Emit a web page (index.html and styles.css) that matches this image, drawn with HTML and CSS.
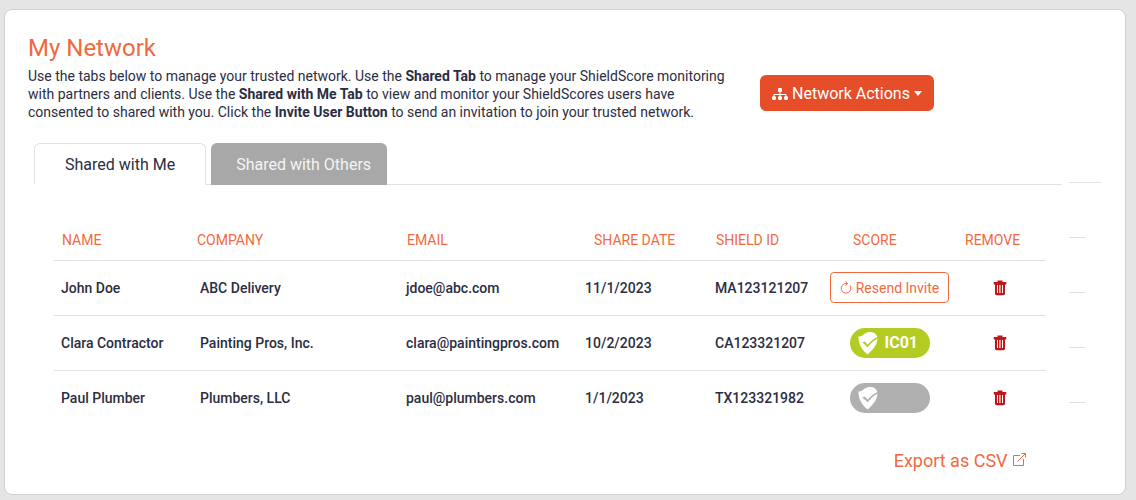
FILE: index.html
```html
<!doctype html>
<html lang="en">
<head>
  <meta charset="UTF-8">
  <meta name="viewport" content="width=device-width, initial-scale=1.0">
  <title>My Network</title>
  <link rel="stylesheet" href="styles.css">
</head>
<body>

  <!-- shared icons -->
  <svg class="sprite" width="0" height="0">
    <symbol id="trash" viewBox="0 0 14 16">
      <path d="M4.500 .5h5V2h3.800v2.500H.7V2h3.800z"/>
      <path fill-rule="evenodd" d="M2 4h10v9.500c0 1-.7 1.700-1.700 1.700H3.700c-1 0-1.700-.7-1.700-1.700zM4 5v8h1V5zM6.300 5v8h1.200V5zM9 5v8h1V5z"/>
    </symbol>
    <symbol id="shield" viewBox="0 0 20 24">
      <path d="M.4 5.400C2.500 6 4.500 4.500 6.500 2.800C9 .8 13 .4 15.500 1.500C17.500 2.500 18.800 4.200 19.400 6C16 7.500 13 10 9.600 13.800L6.800 10.400L4.200 11.200L9.700 16.200C12.500 12.800 15.500 9.800 19.500 7.600C19.300 14 15 18.500 9.800 23.600C4 19 .5 13 .4 5.400z"/>
    </symbol>
  </svg>

  <div class="card">

    <header class="intro">
      <div class="intro-text">
        <h1>My Network</h1>
        <p>Use the tabs below to manage your trusted network. Use the <b>Shared Tab</b> to manage your ShieldScore monitoring
        with partners and clients. Use the <b>Shared with Me Tab</b> to view and monitor your ShieldScores users have
        consented to shared with you. Click the <b>Invite User Button</b> to send an invitation to join your trusted network.</p>
      </div>
      <button type="button" class="btn-actions">
        <svg width="16" height="13" viewBox="0 0 16 13" fill="currentColor">
          <rect x="6" y="1" width="4" height="4" rx="1"/>
          <path d="M2 9.500V7.500h12v2M8 5v4.500" fill="none" stroke="currentColor"/>
          <rect x="0" y="9" width="4" height="4" rx="1.500"/>
          <rect x="6" y="9" width="4" height="4" rx="1.500"/>
          <rect x="12" y="9" width="4" height="4" rx="1.500"/>
        </svg>
        Network Actions
        <span class="caret"></span>
      </button>
    </header>

    <div class="content">
      <main>
        <div class="tabs" role="tablist">
          <button type="button" class="tab active" role="tab" aria-selected="true">Shared with Me</button>
          <button type="button" class="tab" role="tab" aria-selected="false">Shared with Others</button>
        </div>

        <table>
          <colgroup>
            <col class="col-name">
            <col class="col-company">
            <col class="col-email">
            <col class="col-date">
            <col class="col-id">
            <col class="col-score">
            <col class="col-remove">
          </colgroup>
          <thead>
            <tr>
              <th>NAME</th>
              <th class="th-company">COMPANY</th>
              <th>EMAIL</th>
              <th class="th-date">SHARE DATE</th>
              <th>SHIELD ID</th>
              <th class="th-score">SCORE</th>
              <th class="th-remove">REMOVE</th>
            </tr>
          </thead>
          <tbody>
            <tr>
              <td>John Doe</td>
              <td>ABC Delivery</td>
              <td>jdoe@abc.com</td>
              <td>11/1/2023</td>
              <td>MA123121207</td>
              <td class="center">
                <button type="button" class="btn-resend">
                  <svg width="12" height="13" viewBox="0 0 12 13" fill="none" stroke="currentColor">
                    <path d="M7 2.500H6A4.800 4.800 0 1 0 9.800 4.300"/>
                    <path d="M5.500 .5L7.700 2.500L5.500 4.500"/>
                  </svg>
                  Resend Invite
                </button>
              </td>
              <td class="center"><button type="button" class="btn-remove" aria-label="Remove John Doe"><svg width="14" height="16"><use href="#trash"/></svg></button></td>
            </tr>
            <tr>
              <td>Clara Contractor</td>
              <td>Painting Pros, Inc.</td>
              <td>clara@paintingpros.com</td>
              <td>10/2/2023</td>
              <td>CA123321207</td>
              <td class="center"><span class="score good"><svg width="20" height="24"><use href="#shield"/></svg>IC01</span></td>
              <td class="center"><button type="button" class="btn-remove" aria-label="Remove Clara Contractor"><svg width="14" height="16"><use href="#trash"/></svg></button></td>
            </tr>
            <tr>
              <td>Paul Plumber</td>
              <td>Plumbers, LLC</td>
              <td>paul@plumbers.com</td>
              <td>1/1/2023</td>
              <td>TX123321982</td>
              <td class="center"><span class="score"><svg width="20" height="24"><use href="#shield"/></svg></span></td>
              <td class="center"><button type="button" class="btn-remove" aria-label="Remove Paul Plumber"><svg width="14" height="16"><use href="#trash"/></svg></button></td>
            </tr>
          </tbody>
        </table>

        <div class="export">
          <a href="#">Export as CSV
            <svg width="15" height="15" viewBox="0 0 15 15" fill="none" stroke="currentColor">
              <path d="M8 3.500H1.500v10h10V7"/>
              <path d="M5.500 9.500L13.500 1.500M9.500 1.500h4v4"/>
            </svg>
          </a>
        </div>
      </main>

      <!-- empty side column, only the rules show -->
      <aside class="side">
        <div class="side-head"></div>
        <div class="side-row"></div>
        <div class="side-row"></div>
        <div class="side-row"></div>
        <div class="side-row"></div>
      </aside>
    </div>

  </div>

</body>
</html>
```
FILE: styles.css
```css
* {
  box-sizing: border-box;
}

body {
  margin: 0;
  padding: 9px 10px 5px 4px;
  background-color: #e5e5e5;
  font-family: Roboto, Arial, sans-serif;
  font-size: 14px;
  color: #2b2d42;
}

button {
  font-family: inherit;
  cursor: pointer;
}

.sprite {
  position: absolute;
}

.card {
  background-color: white;
  border: 1px solid #d0d0d0;
  border-radius: 8px;
  padding: 24px 24px 21px 23px;
}

/* Title and actions */
.intro {
  display: flex;
  align-items: flex-end;
  gap: 22px;
}

h1 {
  margin: 0 0 5px;
  font-size: 24px;
  font-weight: 400;
  line-height: 28px;
  color: #f06a3f;
}

.intro p {
  margin: 0;
  line-height: 18px;
}

.intro b {
  font-weight: 700;
}

.intro-text {
  flex: 0 1 710px;
}

.btn-actions {
  display: flex;
  align-items: center;
  gap: 4px;
  height: 36px;
  margin-bottom: 10px;
  padding: 0 12px;
  border: none;
  border-radius: 6px;
  background-color: #e64e29;
  color: white;
  font-size: 16px;
  white-space: nowrap;
}

.caret {
  border-top: 5px solid white;
  border-left: 4px solid transparent;
  border-right: 4px solid transparent;
}

.content {
  display: flex;
  gap: 7px;
  margin-top: 22px;
}

main {
  flex: 1;
  padding-left: 6px;
}

/* Tabs */
.tabs {
  display: flex;
  gap: 5px;
  border-bottom: 1px solid #dee2e6;
}

.tab {
  height: 42px;
  margin-bottom: -1px;
  padding: 0 16px 0 25px;
  border: none;
  border-radius: 6px 6px 0 0;
  background-color: #a8a8a8;
  color: #f4f4f4;
  font-size: 16px;
}

.tab.active {
  padding: 0 30px;
  border: 1px solid #dee2e6;
  border-bottom-color: white;
  background-color: white;
  color: #2b2d42;
}

/* Network table */
table {
  width: calc(100% - 36px);
  margin: 36px 16px 0 20px;
  border-collapse: collapse;
  table-layout: fixed;
}

.col-name { width: 139px; }
.col-company { width: 206px; }
.col-email { width: 179px; }
.col-date { width: 130px; }
.col-id { width: 117px; }
.col-score { width: 129px; }
.col-remove { width: 92px; }

th {
  height: 39px;
  padding: 0 8px;
  border-bottom: 1px solid #dee2e6;
  color: #f06a3f;
  font-weight: 400;
  text-align: left;
  white-space: nowrap;
}

.th-company { padding-left: 4px; }
.th-date { padding-left: 16px; }
.th-score { padding-left: 28px; }
.th-remove { padding-left: 11px; }

td {
  height: 55px;
  padding: 0 7px;
  border-bottom: 1px solid #dee2e6;
  font-weight: 500;
  white-space: nowrap;
}

tbody tr:last-child td {
  border-bottom: none;
}

td.center {
  padding: 0;
  text-align: center;
}

.btn-resend {
  display: inline-flex;
  align-items: center;
  gap: 4px;
  height: 31px;
  padding: 0 9px;
  border: 1px solid #f06a3f;
  border-radius: 4px;
  background-color: white;
  color: #f06a3f;
  font-size: 14px;
}

.btn-remove {
  padding: 0;
  border: none;
  background: none;
  fill: #c01818;
  vertical-align: middle;
}

.btn-remove svg {
  display: block;
}

.score {
  display: inline-flex;
  align-items: center;
  gap: 7px;
  width: 80px;
  height: 30px;
  padding-left: 8px;
  border-radius: 15px;
  background-color: #b0b0b0;
  color: white;
  fill: white;
  font-size: 16px;
  font-weight: 700;
  vertical-align: middle;
}

.score.good {
  background-color: #b4cc22;
}

.export {
  margin-top: 24px;
  padding-right: 35px;
  text-align: right;
}

.export a {
  color: #f06a3f;
  font-size: 18px;
  line-height: 24px;
  text-decoration: none;
}

/* Side column */
.side {
  width: 32px;
}

.side-head {
  height: 40px;
  border-bottom: 1px solid #dee2e6;
}

.side-row {
  width: 16px;
  height: 55px;
  border-bottom: 1px solid #e0e0e0;
}
```
